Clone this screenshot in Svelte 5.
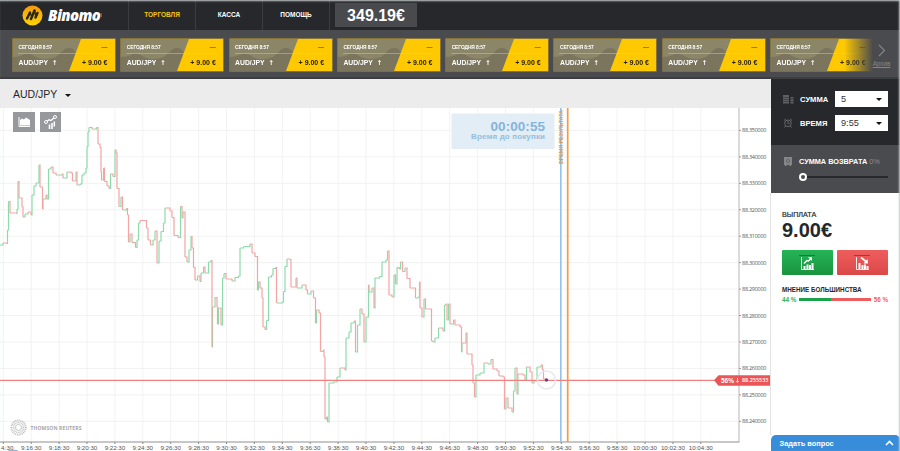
<script>
	const menu = ['ТОРГОВЛЯ', 'КАССА', 'ПОМОЩЬ'];
	const deals = Array(8).fill({ date: 'СЕГОДНЯ 8:57', pair: 'AUD/JPY', profit: '+ 9.00 €' });

	// price line, x y pairs in page units
	const quotes = `0 245 3 243 6 243.5 7.5 230 8.5 201.5 10 213 16 213.5 17 209 18 181.5 19 198 22 207 23 217 25 214 28 212
	31 215 32 195 34 186 36 183 39 165 40 187 42.5 209 43 199 46 195 47 199 48.5 169 51 167 53 173 56 175 62 174 63 178
	67 172 71 173 72.5 181 76 172 77 185 80 184 82 175 84 173 86 168 87 146.5 88 132 89 127.5 92 129 96.5 127.5 98 144
	100 147.5 101 172 101.5 180 103.5 168 104.5 181.5 107 186 109 188.5 110.5 174 113 176.5 115 150 116 153 117 188.5
	119 206.5 121 197 122.5 210 126.5 208.5 127.5 215 128.5 242 130 234 132 242.5 135.5 247.5 137 240 138.5 223 140 220.5
	145.5 220.5 146.5 228 148 240 150.5 245 153 240 155 231 157 263 159 241 161 231.5 163.5 223 165 208 170 211 172 217.5
	174 235.5 178 237.5 180.5 206.5 182 218 183 212 185 257 187 262 189 250 191 236.5 192 248 193.5 267.5 195 280 197.5 276
	200 281.5 201 273 203.5 267 205 273 208.5 262 211 260.5 212 347 212.5 307 215 297.5 217 307 217.5 324 218.5 308 221 325
	222.5 278 224 273.5 226 279 232 281 235 277.5 238.5 276 240 248 243.5 246.5 250 244 252 253 255 256.5 257.5 290
	258.5 282 260 288 262 298 263 327 265 329.5 266.5 320.5 268.5 277 271.5 275 273 268.5 275.5 267.5 276.5 303 282 302
	283.5 291.5 285 266.5 287 259 289.5 259.5 291 287 295 287 296 278 297 288 302 285 306 290 307.5 294 311 291 313.5 298
	315.5 323 316.5 310 319 313 320.5 351.5 323 350 324 357 325 419 326.5 417 327.5 422 329 383 333.5 382 337 377 340 368
	345 370 346 338 349 332 351 323 354 321 355.5 352 357.5 325 360 309 362 314 364 342 366 317 368.5 285 369 292 372 288
	374 308 375 278 379.5 276.5 382 262 386 260 387.5 251 389 295 392 297 394 275 395.5 284 397 267.5 399 269 400.5 262
	402.5 271.5 405 268 407 278.5 410 288 414 288 415.5 298 418 297 419.5 282 420 308 422 317 424 299 425.5 309 430 309
	431.5 341 433 342 435 338 438.5 328 443 331 444.5 305 446 304 447 320 448.5 304 450 324 453.5 320 455 325 460 327
	461.5 352 462 343 465 343 466 333 467 354 472 365 473 383 474.5 397 476 375 480 373 484 363 488 364 491 359.5 493 369
	497 371 499 376 503 377 504.5 409 506 398 508 408 512 412 513.5 391 515 368 517 394 518 374 523 375 525 380 526.5 367
	530 372 532 383 534 381 537 367 541 365 542.5 370 543.5 379 546 380`.trim().split(/\s+/).map(Number);

	let up = '';
	let down = '';
	for (let i = 2; i < quotes.length; i += 2) {
		const [x0, y0, x1, y1] = quotes.slice(i - 2, i + 2);
		const step = `M${x0} ${y0}H${x1}V${y1}`;
		if (y1 < y0) up += step;
		else down += step;
	}

	const prices = Array.from({ length: 12 }, (_, i) => ({
		y: 130.4 + i * 26.45,
		label: (88.35 - i * 0.01).toFixed(6)
	}));

	const times = Array.from({ length: 26 }, (_, i) => {
		const min = 14 + i * 2;
		return {
			x: 3.3 + i * 27.9,
			label: `${9 + Math.floor(min / 60)}:${String(min % 60).padStart(2, '0')}:30`
		};
	});
	// the first label runs off the left side, only its tail is drawn
	times[0].label = '4:30';

	function labelWidth(label) {
		if (label.length > 7) return 24;
		return label.length > 4 ? 20.5 : 12.5;
	}
</script>

<div class="page">
	<header>
		<div class="logo">
			<svg width="21" height="21" viewBox="0 0 21 21">
				<defs>
					<linearGradient id="coin" x2="0" y2="1">
						<stop offset="0" stop-color="#f59a12" />
						<stop offset="1" stop-color="#ffd500" />
					</linearGradient>
				</defs>
				<circle cx="10.5" cy="10.5" r="10" fill="url(#coin)" />
				<g stroke="#2b2718" stroke-width="2.5" stroke-linecap="round" fill="none">
					<path d="M5 13.5 8 7.5M9 14 12.5 5.5M13.5 12.5 15.5 8" />
					<path d="M8 7.5 9.5 11M12.5 5.5 13.8 11" stroke-width="1.5" />
				</g>
			</svg>
			<span>Binomo</span><i></i>
		</div>
		<nav>
			{#each menu as item, i}
				<a href="#top" class:active={i === 0}>{item}</a>
			{/each}
		</nav>
		<div class="balance">349.19€</div>
	</header>

	<section class="deals">
		<div class="list">
			{#each deals as deal}
				<div class="deal">
					<svg width="104" height="34" viewBox="0 0 104 34">
						<path d="M0 19q8 0 13-3 6-1 11 3 8 4 20 0l9-8q4-2 8 0l8 9v14H0z" fill="#716c59" opacity=".65" />
						<path d="M69 1h34v32H57z" fill="#ffc902" />
						<path d="M6 15.5h92" stroke="#e6d79c" stroke-width=".6" opacity=".7" />
					</svg>
					<div class="info">
						<span class="date">{deal.date}</span>
						<span class="dash">—</span>
						<span class="pair">{deal.pair}<b>↑</b></span>
						<span class="profit">{deal.profit}</span>
					</div>
				</div>
			{/each}
		</div>
		<div class="archive">
			<svg width="8" height="13" viewBox="0 0 8 13"><path d="M1 1l5.5 5.5L1 12" fill="none" stroke="#85868a" stroke-width="1.1" /></svg>
			<a href="#archive">Архив</a>
		</div>
	</section>

	<main>
		<div class="trade">
			<div class="asset">AUD/JPY <i class="caret"></i></div>
			<svg class="chart" width="771" height="343" viewBox="0 108 771 343">
				<g stroke="#f2f2f2">
					{#each prices as p}<path d="M0 {p.y}H739" />{/each}
					{#each times as t}<path d="M{t.x} 108V442" />{/each}
				</g>
				<path d={up} fill="none" stroke="#8ddbaa" stroke-width="1.2" />
				<path d={down} fill="none" stroke="#f3a5a5" stroke-width="1.2" />

				<!-- axes -->
				<path d="M739 108V442" stroke="#cfcfcf" stroke-width="1.5" />
				<path d="M0 442H739.5" stroke="#b5b5b5" stroke-width="1.3" />
				<g class="axis">
					{#each prices as p}
						<path d="M739 {p.y}h2" stroke="#999" />
						<text x="742" y={p.y + 2} textLength="24.5">{p.label}</text>
					{/each}
					{#each times as t, i}
						<path d="M{t.x} 442v2" stroke="#888" />
						<text class="time" x={i ? t.x : 7.3} y="450.1" text-anchor="middle" textLength={labelWidth(t.label)}>{t.label}</text>
					{/each}
				</g>

				<!-- chart type and indicator buttons -->
				<rect x="13" y="112" width="22" height="20" fill="#96989c" />
				<path d="M19 117v9.5h11" stroke="#fff" fill="none" />
				<path d="M20 125.5v-5.5l2-1.5 2 1 2-2 4 2.5v5.5z" fill="#fff" />
				<rect x="40" y="112" width="21" height="20" fill="#96989c" />
				<path d="M46 122l3-2.2 2 .7 4-3.5" stroke="#fff" stroke-width="1.3" fill="none" />
				<circle cx="46" cy="122" r="1.5" fill="#96989c" stroke="#fff" />
				<circle cx="55" cy="117" r="1.5" fill="#96989c" stroke="#fff" />
				<path d="M49.5 129v-4.5M52 129v-6M54.3 126.500v-5" stroke="#fff" stroke-width="1.6" />

				<rect x="451.5" y="113.5" width="103" height="35.5" fill="#e3edf5" />
				<text class="timer" x="545" y="130.5" text-anchor="end" textLength="54.5">00:00:55</text>
				<text class="hint" x="545" y="138.8" text-anchor="end" textLength="74">Время до покупки</text>
				<path d="M560.8 108V442" stroke="#8fc1e8" stroke-width="1.5" />
				<path d="M567.7 108V442" stroke="#f69a3c" stroke-width="1.7" />
				<text class="result" transform="translate(563 164) rotate(-90)" textLength="54">ВРЕМЯ РЕЗУЛЬТАТА</text>

				<!-- current price -->
				<path d="M0 380.3H716" stroke="#f08080" stroke-width="1.2" />
				<circle cx="546.5" cy="380" r="9" fill="none" stroke="#ebe7f2" stroke-width="1.6" />
				<circle cx="546.5" cy="380" r="1.8" fill="#604987" />
				<path d="M714 380.3l4.5-5H771v10.5H718.5z" fill="#ea5658" />
				<text class="percent" x="721" y="382.7" textLength="13">56%</text>
				<path d="M737.5 378v4M736.3 381l1.2 1.5 1.2-1.5" stroke="#fff" stroke-width=".8" fill="none" />
				<text class="rate" x="742" y="382.4" textLength="26.5">88.255533</text>

				<g class="reuters" transform="translate(18.5 427.5)">
					<circle r="7.2" fill="none" stroke="#bbb" stroke-width="1.8" stroke-dasharray=".9 .8" />
					<circle r="5" fill="none" stroke="#c4c4c4" stroke-width="1.6" stroke-dasharray=".9 .6" />
					<circle r="3" fill="none" stroke="#d0d0d0" stroke-width="1.2" />
					<text x="12" y="2.3" textLength="51">THOMSON REUTERS</text>
				</g>
				<ellipse cx="13" cy="451" rx="5" ry="1.5" fill="#8fb6d8" />
			</svg>
		</div>

		<aside>
			<div class="order">
				<div class="row">
					<svg width="11" height="9" viewBox="0 0 11 9">
						<path
							d="M0 0h6v2H0zM0 2.6h6v1.6H0zM0 4.8h6v1.6H0zM0 7h6v1.6H0zM7.5 2h3v1.6h-3zM7.5 4.3h3v1.6h-3zM7.5 6.6h3v1.8h-3z"
							fill="#5f6064"
						/>
					</svg>
					<span>СУММА</span>
					<div class="select">5<i class="caret"></i></div>
				</div>
				<div class="row">
					<svg width="11" height="10" viewBox="0 0 11 10" fill="none" stroke="#68696d">
						<circle cx="5" cy="5.3" r="3.3" />
						<path d="M5 3v2.5h1.5M1 2.5 2.8 1M9 2.5 7.2 1M2.7 8 1.5 9.5M7.3 8l1.2 1.5" />
					</svg>
					<span>ВРЕМЯ</span>
					<div class="select">9:55<i class="caret"></i></div>
				</div>
			</div>
			<div class="refund">
				<div class="label">
					<svg width="8" height="9" viewBox="0 0 8 9">
						<path d="M0 0h8v8H0zM1 8h1.5v1H1zM5.5 8H7v1H5.5z" fill="#85868a" />
						<circle cx="4" cy="4" r="1.6" fill="none" stroke="#66676b" />
					</svg>
					<span>СУММА ВОЗВРАТА <em>0%</em></span>
				</div>
				<div class="slider"><i></i></div>
			</div>
			<div class="payout">
				<div class="title">ВЫПЛАТА</div>
				<div class="sum">9.00€</div>
				<div class="buttons">
					<button class="call" aria-label="Вверх">
						<svg width="18" height="16" viewBox="0 0 18 16">
							<path d="M0 .5h16" stroke="#176b36" stroke-width=".8" />
							<path d="M2.5 2v12.5H15" stroke="#fff" stroke-width=".9" fill="none" />
							<path d="M4.500 14v-3h2v3zM7.500 14V9.500h2V14zM10 14v-4h2v4zM12.500 14V8h2v6z" fill="#fff" />
							<path d="M5 8.500l3-3 1.500.500L12 3.500" stroke="#fff" stroke-width="1.5" fill="none" />
							<path d="M9 2h4v4z" fill="#fff" />
						</svg>
					</button>
					<button class="put" aria-label="Вниз">
						<svg width="18" height="16" viewBox="0 0 18 16">
							<path d="M0 .5h16" stroke="#8d3434" stroke-width=".8" />
							<path d="M2.5 2v12.5H15" stroke="#fff" stroke-width=".9" fill="none" />
							<path d="M4.500 14V8h2v6zM7.500 14v-4h2v4zM10 14V9.500h2V14zM12.500 14v-3h2v3z" fill="#fff" />
							<path d="M7 2.500l5 4" stroke="#fff" stroke-width="1.7" />
							<path d="M14 8.500H9.500L13.500 4z" fill="#fff" />
						</svg>
					</button>
				</div>
				<div class="opinion">МНЕНИЕ БОЛЬШИНСТВА</div>
				<div class="votes">
					<span class="green">44 %</span>
					<div class="bar"><i style="width: 44%"></i></div>
					<span class="red">56 %</span>
				</div>
			</div>
			<div class="ask">
				<span>Задать вопрос</span>
				<svg width="9" height="6" viewBox="0 0 9 6"><path d="M1 5l3.5-3.5L8 5" fill="none" stroke="#fff" stroke-width="1.7" /></svg>
			</div>
		</aside>
	</main>
	<div class="edge"></div>
</div>

<style>
	:global(body) {
		background: #fff;
		font-family: 'Liberation Sans', Arial, sans-serif;
	}

	.page {
		position: relative;
		width: 900px;
		height: 451px;
		overflow: hidden;
	}

	.edge {
		position: absolute;
		inset: 0;
		box-shadow: inset -1px 1px 2px #c5cbca;
		pointer-events: none;
	}

	a {
		color: inherit;
		text-decoration: none;
	}

	header {
		display: flex;
		height: 30px;
		background: #27282c;
		color: #fff;
	}

	.logo {
		display: flex;
		align-items: center;
		width: 106px;
		padding-left: 22px;
		font: italic 800 15px 'Open Sans', sans-serif;
		letter-spacing: -0.6px;
	}

	.logo span {
		margin-left: 5px;
	}

	.logo i {
		width: 1px;
		height: 4px;
		margin-left: 1px;
		background: #80571d;
	}

	nav {
		display: flex;
		border-left: 1px solid #3b3c40;
	}

	nav a {
		width: 66px;
		border-right: 1px solid #3b3c40;
		font-size: 6.5px;
		font-weight: bold;
		line-height: 30px;
		text-align: center;
	}

	nav a.active {
		color: #f5c60f;
	}

	.balance {
		width: 82px;
		height: 24px;
		margin: 3px 0 0 5px;
		background: #494a4e;
		font-size: 16px;
		font-weight: bold;
		line-height: 25px;
		text-align: center;
	}

	.deals {
		display: flex;
		height: 49px;
		box-sizing: border-box;
		padding: 8px 0 0 12px;
		background: #4a4b4f;
		border-bottom: 2px solid #3c3d41;
	}

	.list {
		display: flex;
		gap: 4.3px;
		width: 861px;
		overflow: hidden;
		mask-image: linear-gradient(90deg, #000 832px, transparent 861px);
	}

	.deal {
		display: grid;
		flex: none;
		width: 104px;
		height: 34px;
		box-sizing: border-box;
		background: #8c8669;
		border-radius: 2px;
		box-shadow: inset 0 0 0 1px #887339;
		overflow: hidden;
	}

	.deal > * {
		grid-area: 1 / 1;
	}

	.info {
		display: grid;
		grid-template-columns: 1fr auto;
		grid-template-rows: 16px 15px;
		align-items: center;
		padding: 1px 8.5px 0 6.5px;
		color: #fff;
		font-weight: bold;
		white-space: nowrap;
	}

	.date {
		font-size: 4.9px;
		letter-spacing: -0.1px;
	}

	.dash {
		color: #54430b;
		font-size: 6px;
		text-align: right;
	}

	.pair {
		font-size: 6.8px;
	}

	.pair b {
		margin-left: 4px;
		font-family: 'DejaVu Sans', sans-serif;
		font-size: 6.5px;
	}

	.profit {
		color: #292206;
		font-size: 7px;
	}

	.archive {
		display: flex;
		flex-direction: column;
		align-items: center;
		width: 17px;
		padding-top: 6px;
		color: #85868a;
		font-size: 6.3px;
	}

	.archive a {
		margin-top: 3px;
		text-decoration: underline;
	}

	main {
		display: flex;
		height: 372px;
	}

	.trade {
		width: 771px;
	}

	.asset {
		height: 29px;
		padding-left: 13px;
		background: #ececec;
		color: #26272b;
		font-size: 10.5px;
		line-height: 30px;
	}

	.caret {
		display: inline-block;
		border: 3px solid transparent;
		border-top-color: #111;
		border-bottom: 0;
	}

	.asset .caret {
		margin: 0 0 1px 5px;
	}

	.chart {
		display: block;
	}

	.axis text {
		fill: #555;
		font-family: 'Open Sans', sans-serif;
		font-size: 5.5px;
	}

	.axis .time {
		font-family: 'Liberation Sans', sans-serif;
		font-size: 6.2px;
	}

	.timer {
		fill: #83b5dc;
		font-size: 13.5px;
		font-weight: bold;
	}

	.hint {
		fill: #94bfe0;
		font-size: 8px;
		font-weight: bold;
	}

	.result {
		fill: #ce9c62;
		font-size: 5.5px;
		font-weight: bold;
	}

	.percent,
	.rate {
		fill: #fff;
		font-size: 6.5px;
		font-weight: bold;
	}

	.rate {
		font: 600 5.5px 'Open Sans', sans-serif;
	}

	.reuters text {
		fill: #a6a6a6;
		font: bold 5px 'Open Sans', sans-serif;
	}

	aside {
		display: flex;
		flex-direction: column;
		width: 129px;
		color: #26272b;
		font-weight: bold;
	}

	.order {
		height: 65px;
		padding-top: 1px;
		background: #27282c;
		color: #fff;
	}

	.row {
		display: flex;
		align-items: center;
		height: 16px;
		margin-top: 11px;
		padding-left: 12px;
		font-size: 7.6px;
	}

	.row + .row {
		margin-top: 8px;
	}

	.row span {
		width: 35px;
		margin-left: 6px;
	}

	.select {
		display: flex;
		align-items: center;
		justify-content: space-between;
		width: 53px;
		height: 16px;
		box-sizing: border-box;
		padding: 0 6px;
		background: #fff;
		color: #333;
		font-size: 9.2px;
		font-weight: normal;
	}

	.refund {
		height: 48px;
		background: #4a4b4f;
		color: #fff;
	}

	.label {
		display: flex;
		align-items: center;
		padding: 12px 0 0 13px;
		font-size: 7.3px;
		white-space: nowrap;
	}

	.label span {
		margin-left: 7px;
	}

	.label em {
		color: #8b8c90;
		font-style: normal;
		font-weight: normal;
	}

	.slider {
		display: flex;
		align-items: center;
		height: 2px;
		margin: 10px 12px 0 28px;
		background: #27282c;
	}

	.slider i {
		width: 4px;
		height: 4px;
		border: 2.5px solid #fff;
		border-radius: 50%;
		background: #4a4b4f;
	}

	.payout {
		flex: 1;
		padding: 17px 12px 0 11px;
		border-left: 1px solid #e3e3e3;
		margin-left: -1px;
	}

	.title {
		font-size: 7.2px;
		font-weight: normal;
		line-height: 9px;
		-webkit-text-stroke: 0.2px #26272b;
	}

	.sum {
		font-size: 20px;
		line-height: 22px;
	}

	.buttons {
		display: flex;
		gap: 4px;
		margin-top: 9px;
	}

	button {
		display: flex;
		align-items: center;
		justify-content: center;
		flex: 1;
		height: 25px;
		padding: 0;
		border: 0;
		border-radius: 1px;
	}

	.call {
		background: linear-gradient(#25b457, #19943f);
	}

	.put {
		background: linear-gradient(#ee5d5d, #dc4848);
	}

	.opinion {
		margin-top: 11px;
		font-size: 6.3px;
		line-height: 8px;
		white-space: nowrap;
	}

	.votes {
		display: flex;
		align-items: center;
		gap: 2.5px;
		margin-top: 2px;
		font-size: 6.3px;
		line-height: 7px;
		white-space: nowrap;
	}

	.green {
		color: #25b457;
	}

	.red {
		color: #ee5d5d;
	}

	.bar {
		flex: 1;
		height: 3px;
		background: #ee5d5d;
	}

	.bar i {
		display: block;
		height: 3px;
		background: #19a24a;
	}

	.ask {
		display: flex;
		align-items: center;
		justify-content: space-between;
		height: 16px;
		padding: 0 6px 0 8.5px;
		background: #378dd9;
		border-radius: 5px 5px 0 0;
		color: #fff;
		font-size: 7.4px;
	}
</style>
